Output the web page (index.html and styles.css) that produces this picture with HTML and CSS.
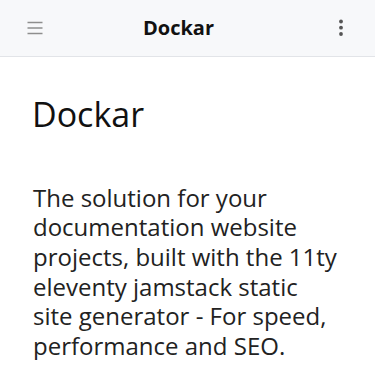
FILE: index.html
```html
<!DOCTYPE html>
<html>
<head>
<meta charset="utf-8">
<link rel="stylesheet" href="styles.css">
</head>
<body>
<header class="topbar">
  <button class="icon-btn" aria-label="Menu">
    <svg width="16" height="14" viewBox="0 0 16 14"><path d="M0.5 1.5h15M0.5 7h15M0.5 12.5h15" stroke="#8e8e8e" stroke-width="1.6" fill="none"/></svg>
  </button>
  <div class="title">Dockar</div>
  <div class="right">
    <button class="icon-btn" aria-label="More">
      <svg width="6" height="18" viewBox="0 0 6 18"><circle cx="3" cy="2.5" r="1.9" fill="#555"/><circle cx="3" cy="8.7" r="1.9" fill="#555"/><circle cx="3" cy="15" r="1.9" fill="#555"/></svg>
    </button>
  </div>
</header>
<main class="content">
  <h1 class="heading">Dockar</h1>
  <p class="lead">The solution for your documentation website projects, built with the 11ty eleventy jamstack static site generator - For speed, performance and SEO.</p>
</main>
</body>
</html>
```
FILE: styles.css
```css
* { box-sizing: border-box; }
html, body { margin: 0; padding: 0; background: #fff; }
body { font-family: "Open Sans", sans-serif; color: #111; }
.topbar {
  height: 57px;
  display: flex;
  align-items: center;
  padding: 0 31px 0 27px;
  background: #f7f8fa;
  border-bottom: 1px solid #e2e4e8;
}
.icon-btn {
  background: none;
  border: 0;
  padding: 0;
  display: flex;
  align-items: center;
  justify-content: center;
}
.title {
  flex: 1;
  text-align: center;
  font-weight: 700;
  font-size: 20px;
  color: #111;
  padding-right: 14px;
  margin-top: -1px;
}
.right { display: flex; justify-content: flex-end; width: 16px; }
.content { padding: 0 33px; }
.heading { font-weight: 400; font-size: 34px; margin: 37px 0 0 -1px; line-height: 1.2; color: #111; }
.lead { font-size: 24px; line-height: 29.6px; margin: 48px 0 0; color: #222; }
```
